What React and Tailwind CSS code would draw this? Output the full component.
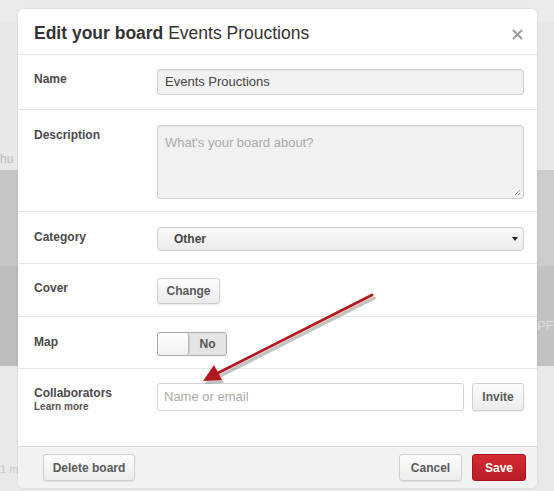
import React from "react";

const font = { fontFamily: '"Liberation Sans", Arial, sans-serif' };

function Row({ label, sub, children, className = "" }) {
  return (
    <div className={`flex border-b border-[#e6e6e6] pl-4 pr-[13px] ${className}`}>
      <div className="w-[123px] shrink-0 pt-[3px]">
        <div className="text-[12px] font-bold text-[#4a4a4a] leading-[14px]">{label}</div>
        {sub && <div className="text-[10px] font-bold text-[#555] leading-[14px]">{sub}</div>}
      </div>
      <div className="flex-1">{children}</div>
    </div>
  );
}

const btn =
  "rounded-[3px] border border-[#cfcfcf] bg-gradient-to-b from-[#fdfdfd] to-[#ececec] text-[12px] font-bold text-[#5a5a5a] shadow-[0_1px_1px_rgba(0,0,0,0.08)]";

export default function App() {
  return (
    <div style={font} className="relative h-[491px] w-[554px] overflow-hidden bg-[#e6e6e6]">
      {/* blurred page behind the modal */}
      <div className="flex h-full flex-col">
        <div className="h-[22px] bg-[#ebebeb]" />
        <div className="h-[148px] bg-[#e8e8e8] pt-[128px] text-[12px] text-[#bbb]">hu</div>
        <div className="flex h-[96px] justify-between">
          <div className="w-[18px] bg-[#c8c6c4]" />
          <div className="w-[17px] bg-[#cdcdcd]" />
        </div>
        <div className="flex h-[100px] justify-between">
          <div className="w-[18px] bg-[#bdbdbd]" />
          <div className="w-[17px] bg-[#c2c2c2] pt-[50px] text-[13px] text-[#ddd]">PF</div>
        </div>
        <div className="flex-1 bg-[#e9e9e9] pt-[95px] text-[11px] text-[#c8c8c8]">1 m</div>
      </div>

      {/* modal */}
      <div className="absolute left-[18px] top-[9px] w-[519px] overflow-hidden rounded-[5px] bg-white shadow-[0_0_2px_rgba(0,0,0,0.15)]">
        <div className="flex h-[46px] items-center justify-between border-b border-[#e6e6e6] pl-4 pr-[14px] pt-[3px]">
          <div className="text-[17.5px] text-[#333]">
            <span className="font-bold">Edit your board</span> Events Prouctions
          </div>
          <svg width="11" height="11" viewBox="0 0 11 11" className="mt-[2px]">
            <path d="M1 1L10 10M10 1L1 10" stroke="#a0a0a0" strokeWidth="2.2" />
          </svg>
        </div>

        <Row label="Name" className="h-[55px] pt-[14px]">
          <div className="flex h-[26px] items-center rounded-[3px] border border-[#d0d0d0] bg-[#f1f1f1] px-[7px] text-[13px] text-[#444] shadow-[inset_0_1px_1px_rgba(0,0,0,0.06)]">
            Events Prouctions
          </div>
        </Row>

        <Row label="Description" className="h-[102px] pt-[15px]">
          <div className="relative h-[74px] rounded-[3px] border border-[#d0d0d0] bg-[#f1f1f1] px-[7px] pt-[7px] text-[13px] text-[#aaa] shadow-[inset_0_1px_1px_rgba(0,0,0,0.06)]">
            What's your board about?
            <svg width="7" height="7" viewBox="0 0 7 7" className="absolute bottom-[2px] right-[2px]">
              <path d="M6 1L1 6M6 4L4 6" stroke="#999" strokeWidth="1" />
            </svg>
          </div>
        </Row>

        <Row label="Category" className="h-[52px] pt-[15px]">
          <div className="flex h-[24px] items-center justify-between rounded-[4px] border border-[#cfcfcf] bg-gradient-to-b from-[#f8f8f8] to-[#ededed] pl-[16px] pr-[5px] text-[12px] font-bold text-[#444]">
            Other
            <svg width="6" height="6" viewBox="0 0 6 6">
              <path d="M0 1H6L3 5Z" fill="#222" />
            </svg>
          </div>
        </Row>

        <Row label="Cover" className="h-[53px] pt-[14px]">
          <button className={`${btn} h-[26px] w-[63px]`}>Change</button>
        </Row>

        <Row label="Map" className="h-[52px] pt-[15px]">
          <div className="flex h-[24px] w-[70px] overflow-hidden rounded-[3px] border border-[#a9a9a9] bg-[#e4e4e4]">
            <div className="w-[31px] rounded-[3px] border-r border-[#b5b5b5] bg-gradient-to-b from-white to-[#f0f0f0] shadow-[1px_0_1px_rgba(0,0,0,0.1)]" />
            <div className="flex flex-1 items-center justify-center text-[12px] font-bold text-[#555]">No</div>
          </div>
        </Row>

        <Row label="Collaborators" sub="Learn more" className="h-[77px] border-b-0 pt-[14px]">
          <div className="flex gap-[8px]">
            <div className="flex h-[28px] flex-1 items-center rounded-[3px] border border-[#d4d4d4] bg-white px-[6px] text-[13px] text-[#aaa]">
              Name or email
            </div>
            <button className={`${btn} h-[28px] w-[52px]`}>Invite</button>
          </div>
        </Row>

        <div className="flex h-[42px] items-center justify-between border-t border-[#dcdcdc] bg-[#f2f2f2] pl-[25px] pr-[11px]">
          <button className={`${btn} h-[27px] w-[92px]`}>Delete board</button>
          <div className="flex gap-[10px]">
            <button className={`${btn} h-[27px] w-[63px]`}>Cancel</button>
            <button className="h-[27px] w-[54px] rounded-[3px] border border-[#a8141c] bg-gradient-to-b from-[#d52b33] to-[#b81c24] text-[12px] font-bold text-white">
              Save
            </button>
          </div>
        </div>
      </div>

      {/* annotation arrow */}
      <svg className="absolute left-0 top-0" width="554" height="491" viewBox="0 0 554 491">
        <g transform="translate(2 3)" opacity="0.35">
          <path d="M372 295L218 373" stroke="#555" strokeWidth="3.5" strokeLinecap="round" />
          <path d="M203 381L214 365L222 380Z" fill="#555" />
        </g>
        <path d="M372 295L218 373" stroke="#b3191c" strokeWidth="2.8" strokeLinecap="round" />
        <path d="M203 381L214 365L222 380Z" fill="#b3191c" />
      </svg>
    </div>
  );
}
